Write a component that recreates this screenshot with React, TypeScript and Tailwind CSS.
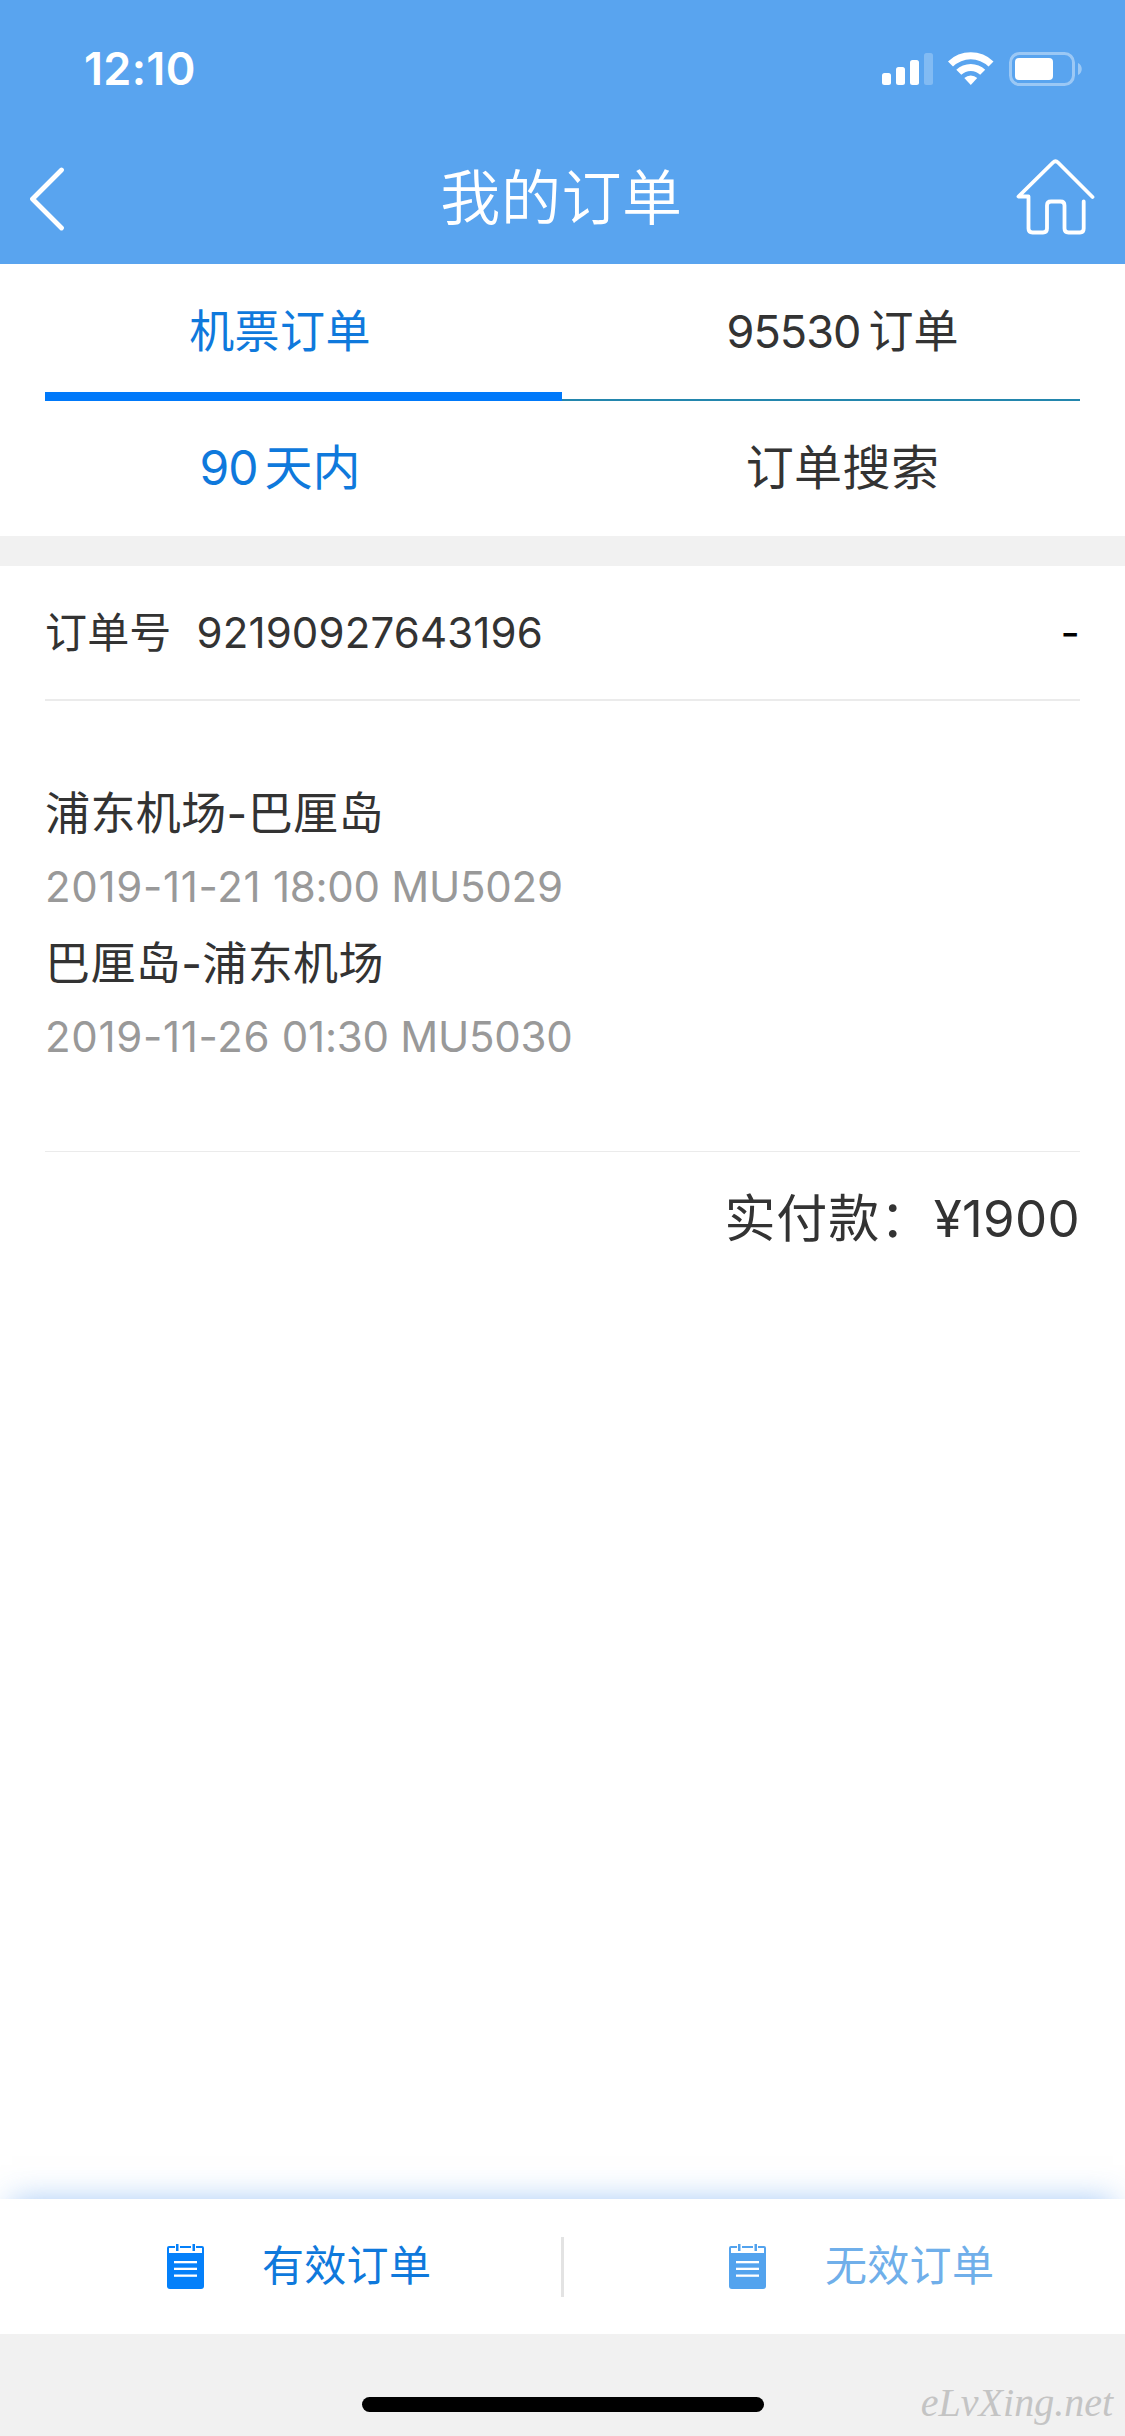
// One flight leg of the order
type Leg = {
    route: string;
    date: string;
    flight: string;
};

const legs: Leg[] = [
    { route: "浦东机场-巴厘岛", date: "2019-11-21", flight: "18:00 MU5029" },
    { route: "巴厘岛-浦东机场", date: "2019-11-26", flight: "01:30 MU5030" },
];

const StatusIcons = () => (
    <svg width="202" height="36" viewBox="0 0 202 36" fill="#fff">
        {/* Signal */}
        <rect x="1" y="22" width="9" height="12" rx="2.5" />
        <rect x="15" y="16" width="9" height="18" rx="2.5" />
        <rect x="29" y="9" width="9" height="25" rx="2.5" />
        <rect x="43" y="2" width="9" height="32" rx="2.5" opacity="0.25" />

        {/* Wifi */}
        <path d="M67 10.5a32.5 32.5 0 0 1 45.5 0l-5 5a25.5 25.5 0 0 0-35.5 0z" />
        <path d="M75.3 18.8a20.8 20.8 0 0 1 28.9 0l-5 5a13.7 13.7 0 0 0-18.9 0z" />
        <path d="M83.3 27a9.5 9.5 0 0 1 12.9 0l-6.4 7z" />

        {/* Battery */}
        <rect
            x="129.5"
            y="2.5"
            width="63"
            height="31"
            rx="9"
            fill="none"
            stroke="#fff"
            strokeWidth="3"
            opacity="0.4"
        />
        <rect x="134" y="7" width="38" height="22" rx="4" />
        <path d="M197 12c5 2 5 10 0 12z" opacity="0.4" />
    </svg>
);

const BackIcon = () => (
    <svg
        width="40"
        height="66"
        viewBox="0 0 40 66"
        fill="none"
        stroke="#fff"
        strokeWidth="4.8"
        strokeLinecap="round"
        strokeLinejoin="round"
    >
        <path d="M34.5 5L5.5 34l29 29" />
    </svg>
);

const HomeIcon = () => (
    <svg
        width="80"
        height="78"
        viewBox="0 0 80 78"
        fill="none"
        stroke="#fff"
        strokeWidth="3.8"
        strokeLinecap="round"
        strokeLinejoin="round"
    >
        <path d="M76.5 38L42 3.500Q39.5 1 37 3.500L2.5 37.500H12.500V69.500Q12.500 73.500 16.500 73.500H27Q31 73.500 31 69.500V46.500Q31 42.500 35 42.500H44.500Q48.500 42.500 48.500 46.500V69.500Q48.500 73.500 52.500 73.500H64Q67.700 73.500 67.700 69.500V42.500" />
    </svg>
);

const OrderIcon = ({ className }: { className: string }) => (
    <svg
        className={className}
        width="37"
        height="46"
        viewBox="0 0 37 46"
        fill="currentColor"
    >
        <path d="M0 9V4Q0 2 2 2H8V4H2V9H35V4H29V2H35Q37 2 37 4V42Q37 45 34 45H3Q0 45 0 42Z" />
        <rect x="9" y="0" width="2.5" height="7" />
        <rect x="25.5" y="0" width="2.5" height="7" />
        <rect x="13" y="2" width="11" height="2" />
        <rect x="7" y="17" width="23" height="2.3" fill="#fff" />
        <rect x="7" y="23.7" width="23" height="2.3" fill="#fff" />
        <rect x="7" y="30.5" width="23" height="2.3" fill="#fff" />
    </svg>
);

const Header = () => (
    <header className="h-[264px] bg-[#59a4ef] text-white">
        <div className="flex h-[132px] items-center justify-between pt-1.5 pr-[42px] pl-[84px]">
            <span className="text-[45px] font-semibold tracking-[0.3px]">
                12:10
            </span>
            <StatusIcons />
        </div>
        <div className="flex h-[132px] items-center justify-between pr-[29px] pl-[27px]">
            <div className="flex w-20">
                <BackIcon />
            </div>
            <h1 className="text-[60px] font-[350] tracking-[0.6px]">
                我的订单
            </h1>
            <HomeIcon />
        </div>
    </header>
);

const Tabs = () => (
    <nav className="h-[272px] px-[45px] text-[#333]">
        <div className="flex h-[137px] text-center text-[45px] leading-[136px]">
            <div className="h-full w-[517px] border-b-9 border-[#0079fa] pr-[47px] tracking-[0.4px] text-[#0f79dc]">
                机票订单
            </div>
            <div className="h-full flex-1 border-b-2 border-[#2386ad] pl-[43px]">
                <span className="tracking-[-1px]">95530</span>
                <span className="ml-2">订单</span>
            </div>
        </div>
        <div className="flex text-center text-[48px] leading-[133px]">
            <div className="w-[517px] pr-[47px] text-[#0f79dc]">
                <span className="tracking-[-1px]">90</span>
                <span className="ml-[7px]">天内</span>
            </div>
            <div className="flex-1 pl-[43px] tracking-[0.4px]">订单搜索</div>
        </div>
    </nav>
);

const Order = () => (
    <section className="flex-1 px-[45px] text-[#333]">
        <div className="flex h-[135px] items-center border-b-2 border-[#ebebeb] text-[42px] tracking-[0.15px]">
            <span>订单号</span>
            <span className="ml-[25px]">92190927643196</span>
            <span className="ml-auto text-black">-</span>
        </div>

        <div className="h-[451px] border-b border-[#ebebeb] pt-[75px]">
            {legs.map((leg) => (
                <div key={leg.route} className="h-[150px]">
                    <p className="h-[75px] text-[45px] leading-[75px] tracking-[0.4px]">
                        {leg.route}
                    </p>
                    <p className="h-[75px] text-[42px] leading-[72px] tracking-[-0.25px] text-[#999]">
                        <span className="tracking-[0.7px]">{leg.date}</span>{" "}
                        {leg.flight}
                    </p>
                </div>
            ))}
        </div>

        <p className="text-right text-[51px] leading-[134px]">
            <span className="tracking-[0.8px]">实付款：</span>
            <span className="ml-0.5 tracking-[0.3px]">¥1900</span>
        </p>
    </section>
);

const BottomBar = () => (
    <div className="flex h-[135px] items-center text-[42px] shadow-[0_-10px_30px_-12px_rgba(60,140,235,0.5)]">
        <div className="flex w-[561px] items-center pl-[167px] text-[#0f79dc]">
            <OrderIcon className="text-[#0480fa]" />
            <span className="mb-0.5 ml-[58px] tracking-[0.3px]">有效订单</span>
        </div>
        <div className="h-[60px] w-[3px] bg-[#e3e3e3]" />
        <div className="flex flex-1 items-center pl-[165px] text-[#70afea]">
            <OrderIcon className="text-[#53a3ee]" />
            <span className="mb-0.5 ml-[59px] tracking-[0.3px]">无效订单</span>
        </div>
    </div>
);

const App = () => {
    return (
        <div className="flex h-[2436px] w-[1125px] flex-col overflow-hidden bg-white font-['Inter','Noto_Sans_CJK_SC',sans-serif] font-[370]">
            <Header />
            <Tabs />
            <div className="h-[30px] bg-[#f1f1f1]" />
            <Order />
            <BottomBar />

            {/* Home indicator */}
            <footer className="relative flex h-[102px] justify-center bg-[#f1f1f1] pt-[63px]">
                <div className="h-[15px] w-[402px] rounded-full bg-black" />
                <span className="absolute right-[12px] bottom-[13px] font-['Liberation_Serif',serif] text-[40px] leading-none text-[#c4c4c4] italic">
                    eLvXing.net
                </span>
            </footer>
        </div>
    );
};

export default App;
